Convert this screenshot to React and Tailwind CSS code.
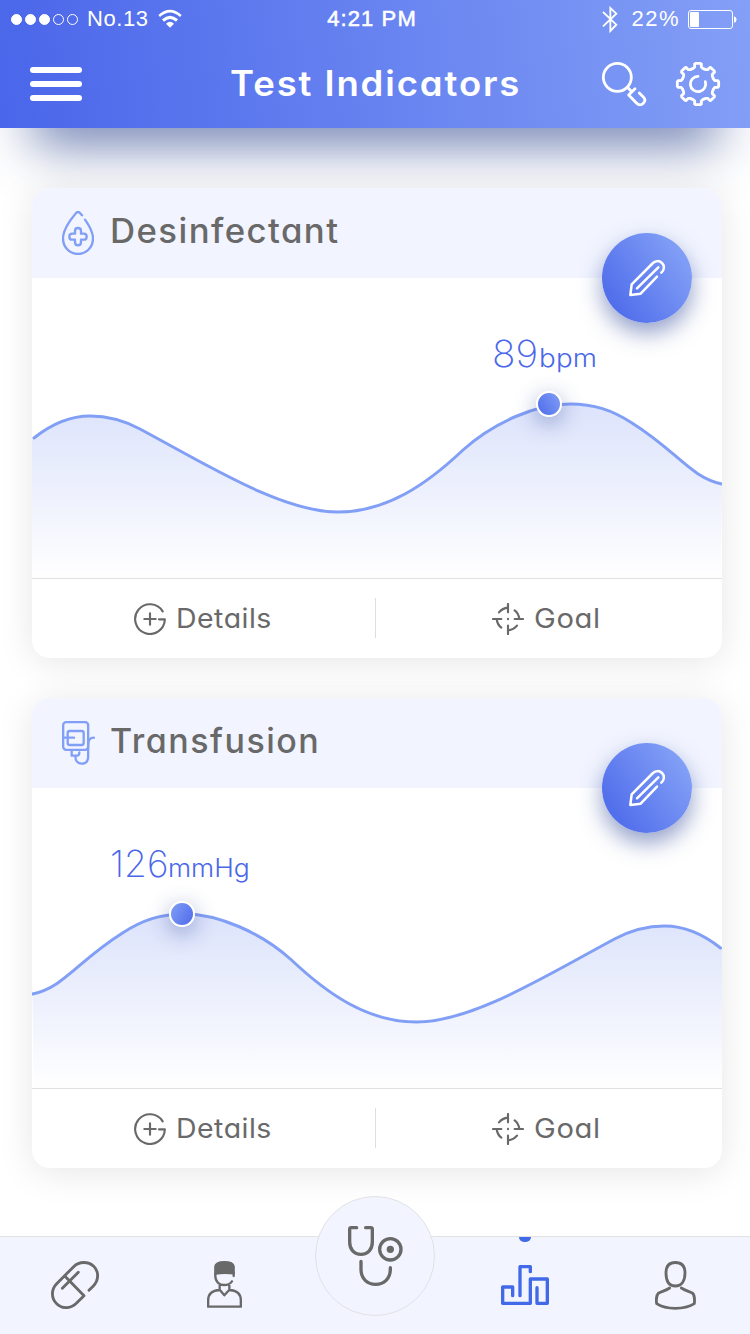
import React from "react";

const line = { fill: "none", stroke: "currentColor", strokeLinecap: "round", strokeLinejoin: "round" };

function gearPath() {
  const pts = [];
  for (let i = 0; i < 8; i++) {
    const a = (i * Math.PI) / 4;
    const put = (r, t) =>
      pts.push(`${(66 + r * Math.cos(a) - t * Math.sin(a)).toFixed(1)} ${(66 + r * Math.sin(a) + t * Math.cos(a)).toFixed(1)}`);
    put(47, -14);
    put(51, -10);
    put(60, -10);
    put(62, -7);
    put(62, 7);
    put(60, 10);
    put(51, 10);
    put(47, 14);
  }
  return `M${pts.join("L")}Z`;
}

const GEAR = gearPath();

function SignalDots() {
  return (
    <div className="flex gap-[3px]">
      {[1, 1, 1, 0, 0].map((on, i) => (
        <span key={i} className={on ? "size-[11px] rounded-full border border-white bg-white" : "size-[11px] rounded-full border border-white"} />
      ))}
    </div>
  );
}

function StatusBar() {
  return (
    <div className="flex h-[38px] items-center justify-between pr-[13px] pl-[11px] font-['Liberation_Sans',sans-serif] text-[22px] leading-[38px]">
      <div className="flex w-[300px] items-center">
        <SignalDots />
        <span className="ml-[9px] w-[62px] tracking-[0.55px] whitespace-nowrap">No.13</span>
        <svg className="mb-[2px] ml-[9px] h-[19px] w-6" viewBox="0 0 72 57">
          <path d="M1 18Q36 -14 71 18L66 24Q36 -3 6 24Z M12 31Q36 9 60 31L54 38Q36 22 18 38Z M24 44Q36 32 48 44L36 56Z" fill="white" />
        </svg>
      </div>
      <span className="pr-1 tracking-[1.1px] [-webkit-text-stroke:0.55px_white]">4:21 PM</span>
      <div className="flex w-[300px] items-center justify-end">
        <svg className="mr-[13px] h-[27px] w-4" viewBox="0 0 48 81">
          <path d="M3 18L43 56L25 75V6L43 23L3 61" fill="none" stroke="white" strokeWidth="5.5" />
        </svg>
        <span className="mr-[8px] tracking-[1.5px]">22%</span>
        <svg className="h-[19px] w-[49px]" viewBox="0 0 49 19">
          <rect x="0.5" y="0.5" width="44" height="18" rx="2.5" fill="none" stroke="white" />
          <rect x="2" y="2" width="9" height="15" rx="1" fill="white" />
          <path d="M46 6.3Q48.6 7 48.6 9.5T46 12.7Z" fill="white" />
        </svg>
      </div>
    </div>
  );
}

function Header() {
  return (
    <header className="relative h-32 shrink-0 bg-[linear-gradient(82deg,#4a66ea_0%,#839ff6_100%)] text-white shadow-[0_50px_52px_-33px_rgba(40,65,140,0.67)]">
      <StatusBar />
      <div className="flex h-[90px] items-center justify-between pt-[2px] pr-[30px] pl-[30px]">
        <div className="flex w-[118px] flex-col gap-2">
          <span className="h-1.5 w-[52px] rounded-full bg-white" />
          <span className="h-1.5 w-[52px] rounded-full bg-white" />
          <span className="h-1.5 w-[52px] rounded-full bg-white" />
        </div>
        <h1 className="scale-x-[1.043] pb-[3px] pl-[2px] text-[35px] leading-[44px] font-semibold tracking-[1.8px] whitespace-nowrap">Test Indicators</h1>
        <div className="flex w-[118px] gap-[30px]">
          <svg className="size-11 overflow-visible" viewBox="0 0 132 132" {...line} strokeWidth="8.5">
            <circle cx="46" cy="46" r="42" />
            <path d="M76 76L88 88M99 80L80 99L104 124C110 130 118 130 124 124C130 118 130 111 124 105L112 93" />
          </svg>
          <svg className="size-11 overflow-visible" viewBox="0 0 132 132" {...line} strokeWidth="8.5">
            <path d={GEAR} />
            <path d="M66 43A23 23 0 1 0 88 59" />
          </svg>
        </div>
      </div>
    </header>
  );
}

function DropIcon() {
  return (
    <svg className="h-11 w-8" viewBox="0 0 96 132" {...line} strokeWidth="7">
      <path d="M60 13L53 5Q48 1 43 5C25 26 3 54 3 82C3 109 23 129 48 129S93 109 93 82C93 61 81 43 69 26" />
      <path d="M39 68V60Q39 51 48 51T57 60V68H65Q74 68 74 77T65 86H57V94Q57 103 48 103T39 94V86H31Q22 86 22 77T31 68Z" />
    </svg>
  );
}

function TransfusionIcon() {
  return (
    <svg className="h-11 w-[33px]" viewBox="0 0 99 132" {...line} strokeWidth="7">
      <rect x="3.5" y="3.5" width="75" height="83" rx="9" />
      <rect x="17" y="30" width="48" height="42" rx="6" />
      <path d="M3 50H36M96 50C84 50 78.5 58 78.5 70V108C78 121 70 128 59 128S40 120 40 106M29 88V104H45Q52 104 52 94" />
    </svg>
  );
}

function DetailsIcon() {
  return (
    <svg className="size-8" viewBox="0 0 96 96" {...line} strokeWidth="6.5">
      <path d="M86 25A44.5 44.5 0 1 0 92.500 49H75M48 31V65M31 48H65" />
    </svg>
  );
}

function GoalIcon() {
  return (
    <svg className="size-8" viewBox="0 0 96 96" {...line} strokeWidth="6.5">
      <path d="M48 3V28M21 28Q31 16 48 14M93 48H68M68 22Q80 31 82 48M48 93V68M75 68Q65 80 48 82M3 48H28M28 74Q16 65 14 48M48 47.5V48.5" />
    </svg>
  );
}

function Chart({ id, flipped }) {
  const curve = "M2 160C22 144 42 138 58 138C78 138 93 143 108 151C175 187 250 234 306 234C355 234 395 206 431 172C462 144 505 126 538 126C562 126 580 132 600 145C646 174 658 199 690 206";
  return (
    <svg className="block h-[300px] w-[690px]" viewBox="0 0 690 300">
      <defs>
        <linearGradient id={id} x1="0" y1="126" x2="0" y2="296" gradientUnits="userSpaceOnUse">
          <stop offset="0" stopColor="#dce3fb" />
          <stop offset="1" stopColor="#fefeff" />
        </linearGradient>
      </defs>
      <g transform={flipped ? "translate(690.5 0) scale(-1 1)" : undefined}>
        <path d={`${curve}L689 300H0V162Z`} fill={`url(#${id})`} />
        <path d={curve} fill="none" stroke="#829ff6" strokeWidth="3" strokeLinecap="round" />
      </g>
    </svg>
  );
}

function EditButton() {
  return (
    <button className="absolute top-[45px] right-[30px] flex size-[90px] items-center justify-center rounded-full bg-[linear-gradient(55deg,#4a67ea_5%,#85a2f7_90%)] text-white shadow-[0_10px_22px_rgba(40,65,150,0.5)]">
      <svg className="size-9 overflow-visible" viewBox="0 0 108 108" {...line} strokeWidth="7.5">
        <path d="M97 38C107 29 107 17 99 9S80 2 72 9L8 73L4 105L35 101L84 50M24 85L88 22" />
      </svg>
    </button>
  );
}

function Card({ id, title, titleClass, icon, value, valueClass, unit, unitClass, readingClass, dotClass, flipped }) {
  return (
    <section className="relative h-[470px] rounded-[18px] bg-white shadow-[0_4px_36px_rgba(0,0,0,0.1)]">
      <div className="flex h-[90px] items-center rounded-t-[18px] bg-[#f2f5ff] pl-[30px]">
        <div className="w-[48px] shrink-0 text-[#829ff6]">{icon}</div>
        <h2 className={titleClass}>{title}</h2>
      </div>
      <Chart id={id} flipped={flipped} />
      <div className="flex h-20 border-t border-[#e1e1e3] text-[27px] leading-10 text-[#696969]">
        <div className="flex w-[343px] items-center gap-[10px] pl-[102px]">
          <DetailsIcon />
          <span className="origin-left scale-x-[1.055] pt-px tracking-[0.45px]">Details</span>
        </div>
        <div className="mt-[19px] h-10 w-px bg-[#dedee0]" />
        <div className="flex items-center gap-[10px] pl-[116px]">
          <GoalIcon />
          <span className="origin-left scale-x-[1.08] pt-px tracking-[0.6px]">Goal</span>
        </div>
      </div>
      <EditButton />
      <div className={readingClass}>
        <span className={valueClass}>{value}</span>
        <span className={unitClass}>{unit}</span>
      </div>
      <span className={dotClass} />
    </section>
  );
}

function TabBar() {
  return (
    <nav className="relative mt-auto flex h-[98px] shrink-0 border-t border-[#e2e2e4] bg-[#f2f5ff] pt-6 text-[#696969]">
      <div className="flex w-[150px] justify-center">
        <svg className="size-12" viewBox="0 0 144 144" {...line} strokeWidth="8.5">
          <path d="M114 88L127 75C144 57 144 31 128 16S85 0 68 17L17 68C0 85 0 112 17 128S58 144 76 127L99 104L42 46M82 34L34 82" />
        </svg>
      </div>
      <div className="flex w-[150px] justify-center pr-px">
        <svg className="h-[47px] w-[35px]" viewBox="0 0 105 141" {...line} strokeWidth="7">
          <path d="M25 38V17Q26 3.500 52 3.500T80 17V37Q52 33 25 38Z" fill="currentColor" />
          <path d="M80 36V45M25 38V46C25 63 38 72 51 72Q67 72 75 61M38 72V86L52 103L67 86V72M38 87C15 88 3.500 98 3.500 118V137H101.500V118C101.500 98 90 88 67 87" />
        </svg>
      </div>
      <div className="w-[150px]" />
      <div className="flex w-[150px] flex-col items-center pt-1 text-[#4169e8]">
        <svg className="h-10 w-12" viewBox="0 0 144 120" {...line} strokeWidth="10">
          <path d="M35 92V66H5V115H88V42H139V115H108V68M57 92V5H88V20" />
        </svg>
      </div>
      <div className="flex w-[150px] justify-center pl-px">
        <svg className="h-[49px] w-[41px]" viewBox="0 0 123 147" {...line} strokeWidth="8.5">
          <path d="M61 4.500C42 4.500 33 16 33 36C33 61 43 75 61 75S90 61 90 36C90 16 80 4.500 61 4.500ZM44 81C30 90 22 90 10 97C3.500 104 3.500 118 5 128C20 138 40 142 61 142S102 138 118 128C119 118 120 104 113 97C101 90 94 90 79 81" />
        </svg>
      </div>
      <span className="absolute top-0 left-[519px] h-[5px] w-3 rounded-b-full bg-[#4169e8]" />
      <div className="absolute -top-[41px] left-[315px] flex size-[120px] items-center justify-center rounded-full border border-[#e2e2e4] bg-[#f2f5ff]">
        <svg className="h-[60px] w-[55px]" viewBox="0 0 165 180" {...line} strokeWidth="10">
          <path d="M26 5H10Q5 5 5 10V48C5 70 18 85 39 85S73 70 73 48V10Q73 5 68 5H53M39 106V130C39 158 58 175 83 175S127 158 127 130V125" />
          <circle cx="127" cy="70" r="32" />
          <circle cx="127" cy="70" r="11" fill="currentColor" stroke="none" />
        </svg>
      </div>
    </nav>
  );
}

export default function App() {
  return (
    <div className="flex h-[1334px] w-[750px] flex-col overflow-hidden bg-white font-['Inter',sans-serif] [font-feature-settings:'cv11']">
      <Header />
      <main className="flex flex-col gap-10 pt-[60px] pr-7 pl-8">
        <Card
          id="fill-desinfectant"
          title="Desinfectant"
          titleClass="origin-left scale-x-[1.022] pb-[4px] text-[34px] leading-[44px] font-medium tracking-[1.4px] text-[#696969]"
          icon={<DropIcon />}
          value="89"
          unit="bpm"
          readingClass="absolute top-[140px] left-[460px] flex items-baseline leading-[52px] text-[#4a67ea]"
          valueClass="w-[47px] origin-left scale-x-[1.05] text-[37px] font-extralight"
          unitClass="origin-left scale-x-[1.11] text-[25px] font-light tracking-[0.2px]"
          dotClass="absolute top-[203px] left-[504px] size-[26px] rounded-full border-2 border-white bg-[linear-gradient(60deg,#4a67ea,#85a2f7)] bg-origin-border shadow-[0_6px_22px_rgba(40,65,150,0.45)]"
        />
        <Card
          id="fill-transfusion"
          flipped
          title="Transfusion"
          titleClass="pb-[4px] text-[34px] leading-[44px] font-medium tracking-[1.5px] text-[#696969]"
          icon={<TransfusionIcon />}
          value="126"
          unit="mmHg"
          readingClass="absolute top-[140px] left-[78px] flex items-baseline leading-[52px] text-[#4a67ea]"
          valueClass="text-[37px] font-extralight"
          unitClass="origin-left scale-x-[1.06] text-[25px] font-light"
          dotClass="absolute top-[203px] left-[137px] size-[26px] rounded-full border-2 border-white bg-[linear-gradient(120deg,#85a2f7,#4a67ea)] bg-origin-border shadow-[0_6px_22px_rgba(40,65,150,0.45)]"
        />
      </main>
      <TabBar />
    </div>
  );
}
